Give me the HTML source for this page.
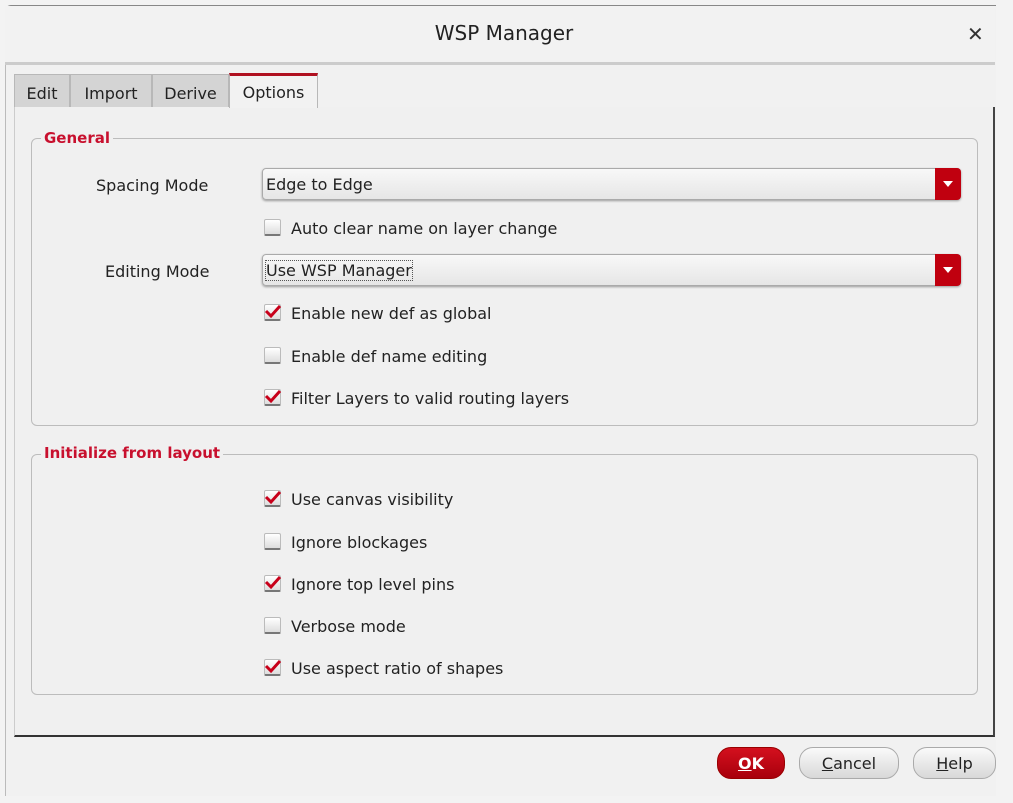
<!DOCTYPE html>
<html><head><style>
body{margin:0;width:1013px;height:803px;background:#f3f3f3;font-family:"DejaVu Sans","Liberation Sans",sans-serif;position:relative;overflow:hidden;color:#222}
.a{position:absolute}
.win{left:5px;top:5px;width:990px;height:790px;background:#f1f1f1;border-top:1px solid #888;border-left:1px solid #bbb;border-radius:6px 0 0 0}
.title{left:5px;top:6px;width:990px;height:56px;border-bottom:3px solid #ccc;background:#f2f2f2}
.tab{top:74px;height:33px;background:#d4d4d4;border:1px solid #b8b8b8;border-bottom:none;font-size:16px;line-height:38px;text-align:center;box-sizing:border-box}
.panel{left:14px;top:107px;width:981px;height:630px;background:#f0f0f0;border-left:1px solid #ccc;border-right:2px solid #444;border-bottom:2px solid #333;box-sizing:border-box}
.grp{border:1px solid #bcbcbc;border-radius:6px;box-sizing:border-box}
.leg{font-weight:bold;color:#c8102e;font-size:15px;background:#f0f0f0;padding:0 3px}
.lbl{font-size:16px;color:#222}
.combo{left:262px;width:699px;height:32px;border:1px solid #aaa;border-radius:4px;background:linear-gradient(#f8f8f8,#e6e6e6);box-sizing:border-box;font-size:16px;line-height:32px;padding-left:3px;box-shadow:0 1px 2px #999}
.dd{position:absolute;right:-1px;top:-1px;width:26px;height:32px;background:#c0000f;border-radius:0 4px 4px 0}
.dd:after{content:"";position:absolute;left:8px;top:13px;border-left:5px solid transparent;border-right:5px solid transparent;border-top:6px solid #fff}
.cb{left:264px;width:17px;height:17px;border:1px solid #bbb;border-bottom:2px solid #777;background:linear-gradient(#fff,#ddd);box-sizing:border-box;border-radius:2px}
.ct{left:291px;font-size:16px}
.btn{top:747px;height:32px;border-radius:14px;border:1px solid #aaa;background:linear-gradient(#fafafa,#d8d8d8);font-size:16px;text-align:center;line-height:32px;box-sizing:border-box}
</style></head><body>
<div class="a win"></div>
<div class="a title"></div>
<div class="a" style="left:0;top:21px;width:1008px;text-align:center;font-size:20px;color:#222">WSP Manager</div>
<div class="a" style="left:967px;top:22px;font-size:20px;font-weight:bold;color:#333">✕</div>
<div class="a tab" style="left:14px;width:56px">Edit</div>
<div class="a tab" style="left:70px;width:82px">Import</div>
<div class="a tab" style="left:152px;width:77px">Derive</div>
<div class="a tab" style="left:229px;width:89px;background:#f2f2f2;border-top:3px solid #b01020;line-height:34px;top:73px;height:35px;z-index:2">Options</div>
<div class="a panel"></div>
<div class="a grp" style="left:31px;top:138px;width:947px;height:288px"></div>
<div class="a leg" style="left:41px;top:129px">General</div>
<div class="a grp" style="left:31px;top:454px;width:947px;height:241px"></div>
<div class="a leg" style="left:41px;top:444px">Initialize from layout</div>
<div class="a lbl" style="left:96px;top:176px">Spacing Mode</div>
<div class="a lbl" style="left:105px;top:262px">Editing Mode</div>
<div class="a combo" style="top:168px">Edge to Edge<div class="dd"></div></div>
<div class="a combo" style="top:254px"><span style="outline:1px dotted #555">Use WSP Manager</span><div class="dd"></div></div>
<div class="a cb" style="top:219px"></div><div class="a ct" style="top:219px">Auto clear name on layer change</div>
<div class="a cb" style="top:304px"></div><div class="a ct" style="top:304px">Enable new def as global</div>
<div class="a cb" style="top:347px"></div><div class="a ct" style="top:347px">Enable def name editing</div>
<div class="a cb" style="top:389px"></div><div class="a ct" style="top:389px">Filter Layers to valid routing layers</div>
<div class="a cb" style="top:490px"></div><div class="a ct" style="top:490px">Use canvas visibility</div>
<div class="a cb" style="top:533px"></div><div class="a ct" style="top:533px">Ignore blockages</div>
<div class="a cb" style="top:575px"></div><div class="a ct" style="top:575px">Ignore top level pins</div>
<div class="a cb" style="top:617px"></div><div class="a ct" style="top:617px">Verbose mode</div>
<div class="a cb" style="top:659px"></div><div class="a ct" style="top:659px">Use aspect ratio of shapes</div>
<svg class="a" style="left:0;top:0" width="1013" height="803">
<g fill="none" stroke="#c8001a" stroke-width="3">
<path d="M266 311 l5 5 l9 -10"/><path d="M266 396 l5 5 l9 -10"/><path d="M266 497 l5 5 l9 -10"/><path d="M266 582 l5 5 l9 -10"/><path d="M266 666 l5 5 l9 -10"/>
</g></svg>
<div class="a btn" style="left:717px;width:68px;background:linear-gradient(#d4101e,#a8000c);border-color:#900;color:#fff;font-weight:bold"><u>O</u>K</div>
<div class="a btn" style="left:799px;width:100px"><u>C</u>ancel</div>
<div class="a btn" style="left:913px;width:83px"><u>H</u>elp</div>
</body></html>
